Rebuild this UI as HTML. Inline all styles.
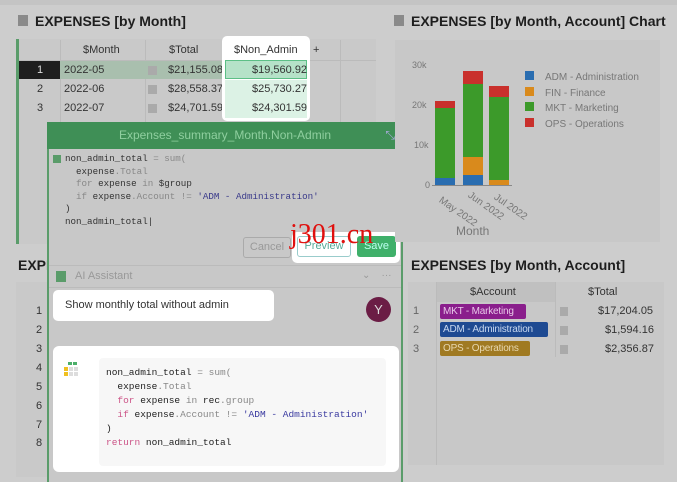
<!DOCTYPE html>
<html><head><meta charset="utf-8"><style>
*{box-sizing:border-box;margin:0;padding:0}
body{width:677px;height:482px;overflow:hidden;background:#cdcdcd;font-family:"Liberation Sans",sans-serif;position:relative;color:#222}
.a{position:absolute}
.t{font-weight:bold;font-size:14px;color:#1e1e1e}
.ic{width:10px;height:11px;background:#8a8a8a;display:inline-block}
.mono{font-family:"Liberation Mono",monospace;font-size:9.2px;line-height:12.5px;white-space:pre}
.cell{position:absolute;font-size:11px;color:#333}
.tag{white-space:nowrap;overflow:hidden;font-size:10px;letter-spacing:-0.2px}
</style></head><body>
<div class="a" style="left:0;top:0;width:677px;height:5px;background:#c4c4c4"></div>
<div class="a ic" style="left:18px;top:15px"></div>
<div class="a t" style="left:35px;top:13px">EXPENSES [by Month]</div>
<div class="a" style="left:16px;top:39px;width:360px;height:205px;background:#c9c9c9;border-left:3px solid #5a9c6a"></div>
<div class="a" style="left:60px;top:40px;width:1px;height:200px;background:#bbb"></div>
<div class="a" style="left:145px;top:40px;width:1px;height:200px;background:#bbb"></div>
<div class="a" style="left:340px;top:40px;width:1px;height:200px;background:#bbb"></div>
<div class="a" style="left:19px;top:60px;width:357px;height:1px;background:#bbb"></div>
<div class="cell" style="left:83px;top:44px">$Month</div>
<div class="cell" style="left:169px;top:44px">$Total</div>
<div class="cell" style="left:313px;top:44px">+</div>
<div class="a" style="left:19px;top:61px;width:41px;height:18px;background:#1e1e1e"></div>
<div class="a" style="left:60px;top:61px;width:165px;height:18px;background:#a9bfae"></div>
<div class="cell" style="left:37px;top:64px;color:#ddd">1</div>
<div class="cell" style="left:37px;top:83px">2</div>
<div class="cell" style="left:37px;top:102px">3</div>
<div class="cell" style="left:64px;top:64px">2022-05</div>
<div class="cell" style="left:64px;top:83px">2022-06</div>
<div class="cell" style="left:64px;top:102px">2022-07</div>
<div class="a" style="left:148px;top:66px;width:9px;height:9px;background:#aaa"></div>
<div class="a" style="left:148px;top:85px;width:9px;height:9px;background:#aaa"></div>
<div class="a" style="left:148px;top:104px;width:9px;height:9px;background:#aaa"></div>
<div class="cell" style="left:168px;top:64px">$21,155.08</div>
<div class="cell" style="left:168px;top:83px">$28,558.37</div>
<div class="cell" style="left:168px;top:102px">$24,701.59</div>
<div class="a" style="left:222px;top:36px;width:88px;height:85px;background:#fff;border-radius:5px"></div>
<div class="cell" style="left:234px;top:44px">$Non_Admin</div>
<div class="a" style="left:225px;top:60px;width:82px;height:19px;background:#b5e2c8;border:1px solid #5cbf86"></div>
<div class="a" style="left:225px;top:80px;width:82px;height:38px;background:#dcf2e5"></div>
<div class="cell" style="left:252px;top:64px">$19,560.92</div>
<div class="cell" style="left:252px;top:83px">$25,730.27</div>
<div class="cell" style="left:252px;top:102px">$24,301.59</div>
<div class="a t" style="left:18px;top:257px">EXPE</div>
<div class="a" style="left:16px;top:282px;width:35px;height:195px;background:#c9c9c9"></div>
<div class="cell" style="left:36px;top:305px">1</div><div class="cell" style="left:36px;top:324px">2</div><div class="cell" style="left:36px;top:343px">3</div><div class="cell" style="left:36px;top:362px">4</div><div class="cell" style="left:36px;top:381px">5</div><div class="cell" style="left:36px;top:400px">6</div><div class="cell" style="left:36px;top:419px">7</div><div class="cell" style="left:36px;top:437px">8</div>
<div class="a" style="left:47px;top:122px;width:356px;height:360px;background:#c8c8c8;border:2px solid #5a9c6a;border-bottom:none"></div>
<div class="a" style="left:47px;top:122px;width:356px;height:27px;background:#3f8f56;color:#8fcf9f;font-size:12px;text-align:center;line-height:27px">Expenses_summary_Month.Non-Admin<span style="position:absolute;right:8px;color:#aad">⤡</span></div>
<div class="a" style="left:53px;top:155px;width:8px;height:8px;background:#5a9c6a"></div>
<div class="a mono" style="left:65px;top:153px;color:#333">non_admin_total <span style="color:#888">= sum(</span>
  expense<span style="color:#888">.Total</span>
  <span style="color:#888">for</span> expense <span style="color:#888">in</span> $group
  <span style="color:#888">if</span> expense<span style="color:#888">.Account != </span><span style="color:#3a3a8a">'ADM - Administration'</span>
)
non_admin_total|</div>
<div class="a" style="left:243px;top:237px;width:48px;height:21px;border:1px solid #aaa;border-radius:3px;font-size:11px;color:#999;text-align:center;line-height:19px">Cancel</div>
<div class="a" style="left:292px;top:232px;width:108px;height:31px;background:#fff;border-radius:5px"></div>
<div class="a" style="left:297px;top:236px;width:54px;height:21px;border:1px solid #9cc;border-radius:3px;font-size:11px;color:#5a9;text-align:center;line-height:19px">Preview</div>
<div class="a" style="left:357px;top:236px;width:39px;height:21px;background:#3fb06a;border-radius:3px;font-size:11px;color:#bfe;text-align:center;line-height:21px">Save</div>
<div class="a" style="left:290px;top:220px;color:#e0100e;font-family:'Liberation Serif',serif;font-size:28px;line-height:30px">j301.cn</div>
<div class="a" style="left:49px;top:265px;width:352px;height:1px;background:#bbb"></div>
<div class="a" style="left:56px;top:271px;width:10px;height:11px;background:#5a9c6a"></div>
<div class="a" style="left:75px;top:270px;font-size:11px;color:#999">AI Assistant</div>
<div class="a" style="left:362px;top:270px;font-size:10px;color:#999">⌄&nbsp;&nbsp;&nbsp;&nbsp;···</div>
<div class="a" style="left:49px;top:287px;width:352px;height:1px;background:#bbb"></div>
<div class="a" style="left:53px;top:290px;width:221px;height:31px;background:#fff;border-radius:5px;font-size:11px;color:#333;padding:9px 12px">Show monthly total without admin</div>
<div class="a" style="left:366px;top:297px;width:25px;height:25px;border-radius:50%;background:#6b1d45;color:#ddd;font-size:13px;text-align:center;line-height:25px">Y</div>
<div class="a" style="left:53px;top:346px;width:346px;height:126px;background:#fff;border-radius:6px"></div>
<div class="a" style="left:64px;top:362px;width:17px;height:17px">
<div class="a" style="left:4px;top:0;width:4px;height:3px;background:#4caf6a"></div><div class="a" style="left:9px;top:0;width:4px;height:3px;background:#4caf6a"></div>
<div class="a" style="left:0;top:5px;width:4px;height:4px;background:#f0c020"></div><div class="a" style="left:5px;top:5px;width:4px;height:4px;background:#ddd"></div><div class="a" style="left:10px;top:5px;width:4px;height:4px;background:#ddd"></div>
<div class="a" style="left:0;top:10px;width:4px;height:4px;background:#f0c020"></div><div class="a" style="left:5px;top:10px;width:4px;height:4px;background:#ddd"></div><div class="a" style="left:10px;top:10px;width:4px;height:4px;background:#ddd"></div></div>
<div class="a" style="left:99px;top:358px;width:287px;height:108px;background:#f7f7f7;border-radius:4px"></div>
<div class="a mono" style="left:106px;top:366px;font-size:9.5px;line-height:14px;color:#222">non_admin_total <span style="color:#888">= sum(</span>
  expense<span style="color:#888">.Total</span>
  <span style="color:#c58">for</span> expense <span style="color:#888">in</span> rec<span style="color:#888">.group</span>
  <span style="color:#c58">if</span> expense<span style="color:#888">.Account != </span><span style="color:#3a3aa0">'ADM - Administration'</span>
)
<span style="color:#c58">return</span> non_admin_total</div>
<div class="a ic" style="left:394px;top:15px"></div>
<div class="a t" style="left:411px;top:13px">EXPENSES [by Month, Account] Chart</div>
<div class="a" style="left:395px;top:40px;width:265px;height:202px;background:#c8c8c8"></div>
<div class="a" style="font-size:9px;color:#777;left:412px;top:60px">30k</div>
<div class="a" style="font-size:9px;color:#777;left:412px;top:100px">20k</div>
<div class="a" style="font-size:9px;color:#777;left:414px;top:140px">10k</div>
<div class="a" style="font-size:9px;color:#777;left:425px;top:180px">0</div>
<div class="a" style="left:435px;top:101px;width:20px;height:7px;background:#c9302c"></div>
<div class="a" style="left:435px;top:108px;width:20px;height:70px;background:#3c9a2a"></div>
<div class="a" style="left:435px;top:178px;width:20px;height:7px;background:#2a6db0"></div>
<div class="a" style="left:463px;top:71px;width:20px;height:13px;background:#c9302c"></div>
<div class="a" style="left:463px;top:84px;width:20px;height:73px;background:#3c9a2a"></div>
<div class="a" style="left:463px;top:157px;width:20px;height:18px;background:#d98a1c"></div>
<div class="a" style="left:463px;top:175px;width:20px;height:10px;background:#2a6db0"></div>
<div class="a" style="left:489px;top:86px;width:20px;height:11px;background:#c9302c"></div>
<div class="a" style="left:489px;top:97px;width:20px;height:83px;background:#3c9a2a"></div>
<div class="a" style="left:489px;top:180px;width:20px;height:5px;background:#d98a1c"></div>
<div class="a" style="left:432px;top:185px;width:80px;height:1px;background:#888"></div>
<div class="a" style="font-size:10px;color:#777;left:443px;top:195px;transform:rotate(35deg);transform-origin:left top">May 2022</div>
<div class="a" style="font-size:10px;color:#777;left:472px;top:190px;transform:rotate(35deg);transform-origin:left top">Jun 2022</div>
<div class="a" style="font-size:10px;color:#777;left:498px;top:192px;transform:rotate(35deg);transform-origin:left top">Jul 2022</div>
<div class="a" style="font-size:12px;color:#777;left:456px;top:224px">Month</div>
<div class="a" style="left:525px;top:71px;width:9px;height:9px;background:#2a6db0"></div>
<div class="a" style="left:525px;top:87px;width:9px;height:9px;background:#d98a1c"></div>
<div class="a" style="left:525px;top:102px;width:9px;height:9px;background:#3c9a2a"></div>
<div class="a" style="left:525px;top:118px;width:9px;height:9px;background:#c9302c"></div>
<div class="a" style="font-size:10px;color:#777;left:545px;top:70px;line-height:15.5px">ADM - Administration<br>FIN - Finance<br>MKT - Marketing<br>OPS - Operations</div>
<div class="a t" style="left:411px;top:257px">EXPENSES [by Month, Account]</div>
<div class="a" style="left:408px;top:282px;width:256px;height:183px;background:#c8c8c8"></div>
<div class="a" style="left:437px;top:282px;width:118px;height:20px;background:#c0c0c0"></div>
<div class="a" style="left:436px;top:282px;width:1px;height:183px;background:#bbb"></div>
<div class="a" style="left:555px;top:282px;width:1px;height:75px;background:#bbb"></div>
<div class="cell" style="left:470px;top:286px">$Account</div>
<div class="cell" style="left:588px;top:286px">$Total</div>
<div class="cell" style="left:413px;top:305px;color:#666">1</div>
<div class="cell" style="left:413px;top:324px;color:#666">2</div>
<div class="cell" style="left:413px;top:343px;color:#666">3</div>
<div class="a tag" style="left:440px;top:304px;width:86px;height:15px;background:#8a1e8c;border-radius:2px;color:#e8c8e8;padding-left:3px;line-height:15px">MKT - Marketing</div>
<div class="a tag" style="left:440px;top:322px;width:108px;height:15px;background:#1e4a92;border-radius:2px;color:#c8d8f0;padding-left:3px;line-height:15px">ADM - Administration</div>
<div class="a tag" style="left:440px;top:341px;width:90px;height:15px;background:#a07a22;border-radius:2px;color:#e8d8b0;padding-left:3px;line-height:15px">OPS - Operations</div>
<div class="a" style="left:560px;top:307px;width:8px;height:9px;background:#aaa"></div>
<div class="a" style="left:560px;top:326px;width:8px;height:9px;background:#aaa"></div>
<div class="a" style="left:560px;top:345px;width:8px;height:9px;background:#aaa"></div>
<div class="cell" style="left:598px;top:305px">$17,204.05</div>
<div class="cell" style="left:605px;top:324px">$1,594.16</div>
<div class="cell" style="left:605px;top:343px">$2,356.87</div>
</body></html>
